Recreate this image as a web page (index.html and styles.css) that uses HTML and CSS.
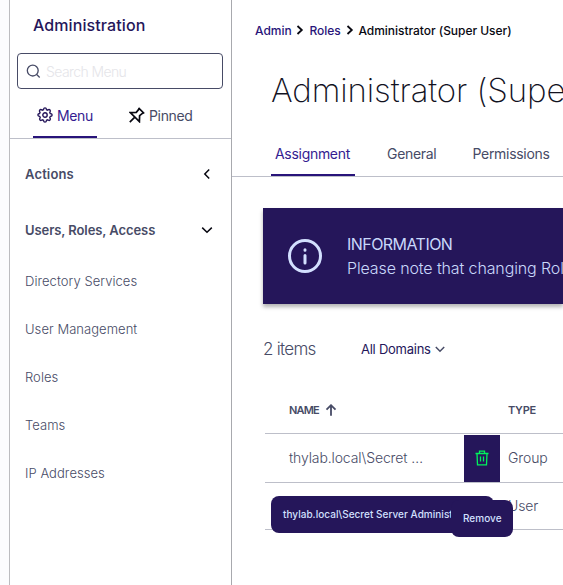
FILE: index.html
```html
<!DOCTYPE html>
<html lang="en">
<head>
<meta charset="utf-8">
<title>Administrator (Super User)</title>
<link rel="stylesheet" href="styles.css">
</head>
<body>
<div class="app">
  <aside class="sidebar">
    <h2 class="sidebar-title">Administration</h2>
    <div class="search">
      <svg class="search-icon" viewBox="0 0 16 16" width="15" height="15"><circle cx="7.2" cy="7" r="5.8"/><path d="M11.400 11.200 14.600 14.400"/></svg>
      <span class="search-text">Search Menu</span>
    </div>
    <nav class="side-tabs">
      <a class="side-tab active">
        <svg class="gear" viewBox="0 0 24 24" width="16" height="16"><circle cx="12" cy="12" r="3.300"/><path d="M12 1.300c1.300 0 2 .8 2.300 2.700l1.500.7c1.700-1.200 2.800-1.200 3.700-.2s.9 2-.3 3.700l.7 1.600c1.900.3 2.800 1 2.800 2.200s-.9 2-2.800 2.300l-.7 1.500c1.200 1.700 1.200 2.800.3 3.700s-2 .9-3.700-.3l-1.500.7c-.3 1.900-1 2.800-2.300 2.800s-2-.9-2.300-2.800l-1.500-.7c-1.700 1.200-2.800 1.200-3.700.3s-.9-2 .3-3.700l-.7-1.500C1.900 13.700 1.300 13.200 1.300 12s.9-1.900 2.500-2.200l.7-1.600c-1.200-1.700-1.200-2.700-.3-3.700s2-1 3.700.2l1.800-.7C10 2.100 10.700 1.300 12 1.300z"/></svg>
        <span class="t-menu">Menu</span>
      </a>
      <a class="side-tab pinned">
        <svg class="pin" viewBox="0 0 16 16" width="16" height="16"><path d="M9.500.8 15.200 6.500M10.300 1.600 7.300 5.400 1.400 5.600 10.400 14.600 10.600 8.700 14.400 5.700M5.800 10.200.8 15.200"/></svg>
        <span class="t-pinned">Pinned</span>
      </a>
    </nav>
    <div class="group"><span class="t-actions">Actions</span><svg class="chev" viewBox="0 0 12 12" width="12" height="12"><path d="M8.200 1.500 3.800 6l4.400 4.500"/></svg></div>
    <div class="group"><span class="t-users">Users, Roles, Access</span><svg class="chev" viewBox="0 0 12 12" width="12" height="12"><path d="M1.200 3.600 6 8.200l4.800-4.600"/></svg></div>
    <ul class="links">
      <li>Directory Services</li>
      <li>User Management</li>
      <li>Roles</li>
      <li>Teams</li>
      <li>IP Addresses</li>
    </ul>
  </aside>
  <main class="main">
    <nav class="crumbs">
      <a>Admin</a>
      <svg class="sep" viewBox="0 0 8 10" width="8" height="10"><path d="M1.500 1 5.800 5 1.500 9"/></svg>
      <a>Roles</a>
      <svg class="sep" viewBox="0 0 8 10" width="8" height="10"><path d="M1.500 1 5.800 5 1.500 9"/></svg>
      <span>Administrator (Super User)</span>
    </nav>
    <h1 class="title">Administrator (Super User)</h1>
    <nav class="tabs">
      <a class="tab active">Assignment</a>
      <a class="tab">General</a>
      <a class="tab">Permissions</a>
    </nav>
    <section class="notice">
      <svg class="info" viewBox="0 0 34 34" width="34" height="34"><circle cx="17" cy="17" r="15.500"/><path d="M17 16.500V24M17 10.800v.4"/></svg>
      <div class="notice-body">
        <div class="n-title">INFORMATION</div>
        <div class="n-text">Please note that changing Role assignments</div>
      </div>
    </section>
    <div class="toolbar">
      <span class="count">2 items</span>
      <span class="domains">All Domains</span>
      <svg class="dom-chev" viewBox="0 0 12 12" width="12" height="12"><path d="M1.800 4 6 8.200 10.200 4"/></svg>
    </div>
    <div class="table">
      <div class="row head">
        <div class="name"><span class="t-name">NAME</span><svg class="arrow" viewBox="0 0 12 12" width="12" height="12"><path d="M6 11.800V1.500M1.500 5.600 6 1.200 10.500 5.600"/></svg></div>
        <div class="type">TYPE</div>
      </div>
      <div class="row first">
        <div class="name"><span>thylab.local\Secret …</span></div>
        <div class="remove"><svg class="trash" viewBox="0 0 16 16" width="16" height="16"><path d="M1.500 3.500h13M5.500 3.500V1.200h5v2.300M3 3.500l.5 11.300h9L13 3.500M6.500 6.500v5M9.500 6.500v5"/></svg></div>
        <div class="type">Group</div>
      </div>
      <div class="row second">
        <div class="name"></div>
        <div class="type">User</div>
        <div class="tip tip-name">thylab.local\Secret Server Administrators</div>
        <div class="tip tip-remove">Remove</div>
      </div>
    </div>
  </main>
</div>
</body>
</html>
```
FILE: styles.css
```css
* { box-sizing: border-box; }
body { margin: 0; width: 563px; height: 585px; overflow: hidden; background: #fff; font-family: Inter, "Open Sans", sans-serif; color: #474b66; }
svg { fill: none; stroke: currentColor; flex: none; }
h1, h2, ul { margin: 0; padding: 0; font-weight: inherit; }
span, a, h1, .type, .tip, li { white-space: nowrap; }
.app { display: flex; height: 585px; background: #fcfcfe; padding-left: 9px; }
.sidebar { width: 223px; flex: none; background: #fff; border-left: 1px solid #bcbcc0; border-right: 1px solid #a8a9ae; }
.sidebar-title { height: 53px; padding-left: 23px; line-height: 50px; font-size: 16px; font-weight: 450; letter-spacing: .1px; color: #25165a; }
.search { display: flex; align-items: center; height: 36px; margin: 0 8px 0 7px; padding-left: 8px; border: 1px solid #474b66; border-radius: 4px; gap: 5px; }
.search-icon { stroke-width: 1.4; }
.search-text { font-size: 14px; font-weight: 300; letter-spacing: -.6px; color: #e5e5e9; }
.side-tabs { display: flex; height: 50px; padding-left: 23px; border-bottom: 1px solid #bdbfc9; }
.side-tab { display: flex; align-items: center; gap: 4px; width: 64px; height: 49px; padding: 4px 4px 0; font-size: 14px; letter-spacing: -.35px; }
.side-tab.active { color: #341c91; border-bottom: 2px solid #28147a; }
.side-tab.pinned { width: auto; margin-left: 28px; }
.gear { color: #25165a; stroke-width: 2.1; }
.pin { color: #080811; stroke-width: 1.7; margin-top: -2px; }
.t-menu { padding-top: 2px; }
.group { display: flex; align-items: center; justify-content: space-between; padding: 0 18px 0 15px; font-size: 13px; font-weight: 600; }
.t-actions { letter-spacing: .15px; }
.t-users { letter-spacing: -.08px; }
.side-tabs + .group { height: 70px; }
.group + .group { height: 42px; }
.chev { color: #080811; stroke-width: 1.5; }
.links { list-style: none; padding: 6px 0 0 15px; }
.links li { height: 48px; line-height: 49px; font-size: 13px; font-weight: 350; letter-spacing: .05px; }
.main { flex: 1; min-width: 0; background: #fff; overflow: hidden; }
.crumbs { display: flex; align-items: center; height: 60px; padding-left: 23px; font-size: 12px; font-weight: 500; letter-spacing: -.03px; color: #080811; }
.crumbs a { color: #28147a; }
.sep { margin: 0 4.9px; stroke-width: 1.8; }
.title { height: 72px; line-height: 60px; padding-left: 39px; font-size: 33px; font-weight: 250; letter-spacing: -.1px; color: #12121f; }
.tabs { display: flex; height: 45px; padding-left: 39px; border-bottom: 1px solid #bdbfc9; font-size: 14px; letter-spacing: -.3px; }
.tab { flex: none; height: 44px; line-height: 44px; padding: 0 4px; margin-right: 28px; }
.tab.active { color: #341c91; border-bottom: 2px solid #28147a; width: 84px; }
.notice { display: flex; align-items: center; height: 96px; margin: 31px 0 0 31px; padding-left: 25px; background: #25165a; color: #c9d8fb; box-shadow: 0 3px 4px rgba(0,0,0,.3); }
.info { stroke-width: 3; stroke-linecap: round; color: #d3e0ff; }
.notice-body { margin-left: 25px; line-height: 24px; font-size: 16px; white-space: nowrap; }
.n-title { letter-spacing: -.55px; }
.n-text { letter-spacing: -.12px; font-weight: 350; }
.toolbar { display: flex; align-items: center; height: 84px; padding: 6px 0 0 31px; }
.count { width: 98px; font-size: 17px; font-weight: 300; letter-spacing: -.7px; }
.domains { width: 70px; font-size: 13px; letter-spacing: -.25px; color: #25165a; }
.dom-chev { margin-left: 3px; stroke-width: 1.5; }
.table { margin-left: 33px; }
.row { display: flex; align-items: center; border-bottom: 1px solid #bdbfc9; position: relative; font-size: 14px; font-weight: 350; letter-spacing: -.12px; }
.type, .name { padding-bottom: 2px; }
.head { height: 46px; font-size: 11px; font-weight: 600; letter-spacing: -.3px; }
.t-name { width: 30px; letter-spacing: -.8px; }
.first { height: 49px; }
.second { height: 47px; }
.name { display: flex; align-items: center; width: 243px; padding-left: 24px; }
.first .name { width: 199px; }
.arrow { margin-left: 6px; stroke-width: 1.8; }
.remove { display: flex; align-items: center; justify-content: center; width: 36px; height: 47px; margin: 1px 8px 0 0; background: #25165a; color: #00f25c; }
.trash { stroke-width: 1.3; margin-top: -2px; }
.tip { position: absolute; height: 37px; border-radius: 8px; background: #25165a; color: #d3e0ff; font-size: 10px; font-weight: 450; letter-spacing: .03px; line-height: 37px; padding: 0 12px; }
.tip-name { left: 6px; top: 13px; width: 223px; overflow: hidden; }
.tip-remove { left: 186px; top: 17px; width: 62px; }
```
